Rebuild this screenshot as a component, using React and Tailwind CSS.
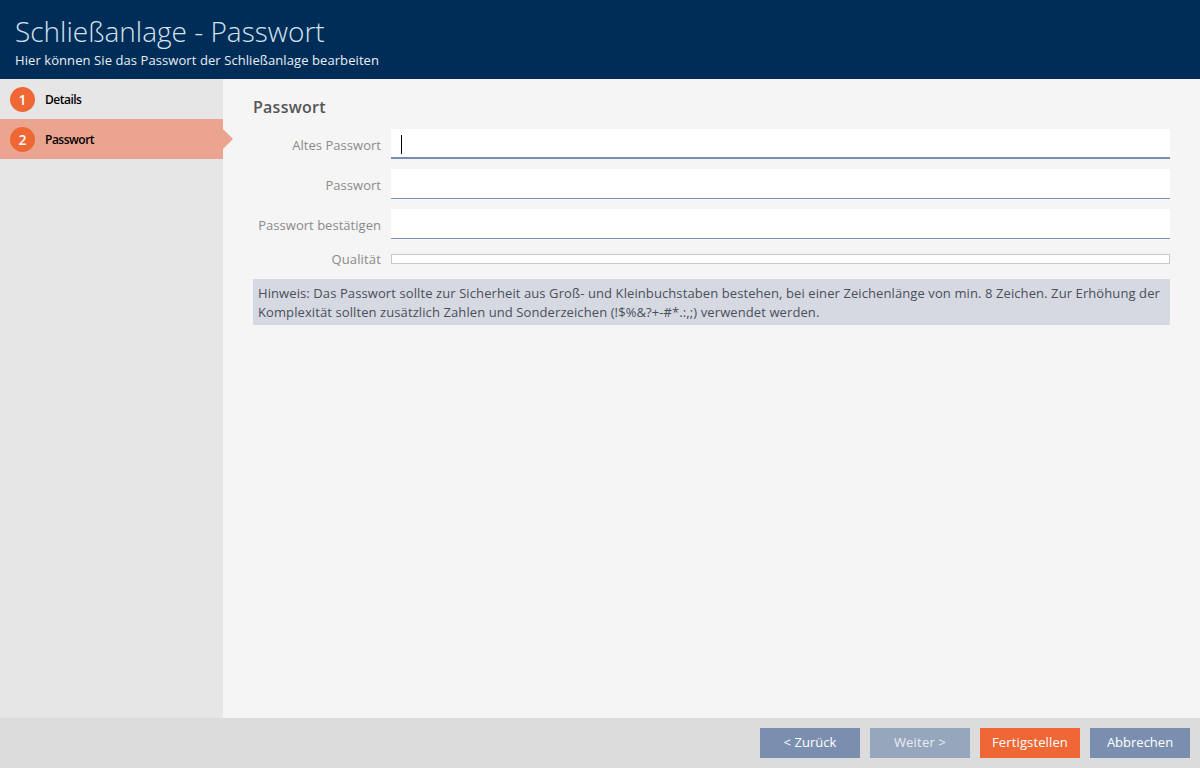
function Step({ num, label, active }) {
  return (
    <div className={`relative flex h-10 items-center pl-2.5 ${active ? 'bg-[#eaa48f]' : ''}`}>
      <span className="flex h-[25px] w-[25px] items-center justify-center rounded-full bg-[#ee6735] text-[14px] font-semibold text-white">
        {num}
      </span>
      <span className="ml-2.5 pt-[2px] text-[12px] font-semibold tracking-[-0.5px] text-black">{label}</span>
      {active && (
        <span className="absolute left-full top-1/2 h-0 w-0 -translate-y-1/2 border-y-[10px] border-l-[10px] border-y-transparent border-l-[#eaa48f]" />
      )}
    </div>
  )
}

function Field({ label, thick, children }) {
  return (
    <div className="flex h-[30px] items-center">
      <label className="w-[128px] pt-[4px] text-right text-[13px] tracking-[0.03px] text-[#8a8a8a]">{label}</label>
      <div className={`ml-2.5 flex h-[30px] flex-1 items-center bg-white ${thick ? 'border-b-2' : 'border-b'} border-[#7a8fb0]`}>
        {children}
      </div>
    </div>
  )
}

export default function App() {
  return (
    <div className="flex h-[768px] w-[1200px] flex-col overflow-hidden bg-[#f5f5f5] font-['Open_Sans',sans-serif]">
      {/* Header */}
      <header className="h-[79px] shrink-0 bg-[#002d58] pl-[15px] pt-[10px] text-white">
        <h1 className="text-[28px] font-light leading-[42px] text-[#d5e2ee]">Schließanlage - Passwort</h1>
        <p className="text-[13px] leading-[16px] tracking-[0.08px] text-[#e8eef4]">
          Hier können Sie das Passwort der Schließanlage bearbeiten
        </p>
      </header>

      <div className="flex min-h-0 flex-1">
        {/* Steps */}
        <aside className="w-[223px] shrink-0 bg-[#e6e6e6]">
          <Step num="1" label="Details" />
          <Step num="2" label="Passwort" active />
        </aside>

        {/* Form */}
        <main className="flex-1 px-[30px] pt-[17px]">
          <h2 className="h-[33px] text-[16px] font-semibold leading-[22px] tracking-[0.25px] text-[#555555]">Passwort</h2>
          <div className="flex flex-col gap-2.5">
            <Field label="Altes Passwort" thick>
              <span className="ml-2.5 mt-[3px] h-[19px] w-px bg-black" />
            </Field>
            <Field label="Passwort" />
            <Field label="Passwort bestätigen" />
          </div>
          <div className="mt-[10px] flex h-[20px] items-center">
            <label className="w-[128px] pt-[2px] text-right text-[13px] tracking-[0.15px] text-[#8a8a8a]">Qualität</label>
            <div className="ml-2.5 h-[10px] flex-1 border border-[#c8c8c8] bg-white" />
          </div>
          <div className="mt-[10px] h-[46px] bg-[#d6d9e2] px-[5px] pt-[5px] text-[13px] leading-[19px] tracking-[0.095px] text-[#4a4f5a]">
            Hinweis: Das Passwort sollte zur Sicherheit aus Groß- und Kleinbuchstaben bestehen, bei einer Zeichenlänge von min. 8 Zeichen. Zur Erhöhung der Komplexität sollten zusätzlich Zahlen und Sonderzeichen (!$%&amp;?+-#*.:,;) verwendet werden.
          </div>
        </main>
      </div>

      {/* Footer */}
      <footer className="flex h-[50px] shrink-0 items-center justify-end gap-2.5 bg-[#dcdcdc] pr-2.5">
        <button className="h-[30px] w-[100px] bg-[#7a8fb0] text-[13px] tracking-[0.05px] text-white">&lt; Zurück</button>
        <button className="h-[30px] w-[100px] bg-[#96a7bd] text-[13px] tracking-[0.2px] text-[#e8ecf2]">Weiter &gt;</button>
        <button className="h-[30px] w-[100px] bg-[#ee6735] text-[13px] tracking-[0.13px] text-white">Fertigstellen</button>
        <button className="h-[30px] w-[100px] bg-[#7a8fb0] text-[13px] text-white">Abbrechen</button>
      </footer>
    </div>
  )
}
